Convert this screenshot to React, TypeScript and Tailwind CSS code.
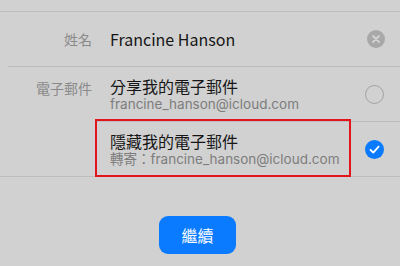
import React from "react";

const font = { fontFamily: '"Noto Sans CJK TC", "Noto Sans", sans-serif' };
const subFont = { fontFamily: 'Inter, "Noto Sans CJK TC", sans-serif' };

const ClearIcon = () => (
  <svg width="18" height="18" viewBox="0 0 18 18">
    <circle cx="9" cy="9" r="9" fill="#a8a8a8" />
    <path d="M6 6 L12 12 M12 6 L6 12" stroke="#d3d3d3" strokeWidth="1.8" strokeLinecap="round" />
  </svg>
);

const EmptyCircle = () => (
  <div className="w-[19px] h-[19px] rounded-full border-[1.5px] border-[#a3a3a3]" />
);

const CheckCircle = () => (
  <svg width="19" height="19" viewBox="0 0 19 19">
    <circle cx="9.5" cy="9.5" r="9.5" fill="#0a7aff" />
    <path d="M5.5 9.8 L8.3 12.6 L13.6 6.6" fill="none" stroke="#ffffff" strokeWidth="1.8" strokeLinecap="round" strokeLinejoin="round" />
  </svg>
);

export default function App() {
  return (
    <div className="w-[400px] h-[266px] bg-[#d1d1d1] overflow-hidden" style={font}>
      <div className="h-[12px] border-b border-[#bdbdbd]" />

      {/* name row */}
      <div className="flex items-center h-[55px] ml-[8px] border-b border-[#bdbdbd]">
        <div className="w-[84px] text-right text-[14px] text-[#8a8a8a]">姓名</div>
        <div className="flex-1 pl-[18px] text-[16px] text-[#161616]">Francine Hanson</div>
        <div className="w-[52px] flex justify-center pl-[4px]">
          <ClearIcon />
        </div>
      </div>

      {/* email options */}
      <div className="flex border-b border-[#bdbdbd]">
        <div className="w-[92px] pt-[11px] text-right text-[14px] text-[#8a8a8a]">電子郵件</div>
        <div className="flex-1 ml-[4px]">
          <div className="flex items-center h-[55px] border-b border-[#bdbdbd]">
            <div className="flex-1 pl-[14px]">
              <div className="text-[16px] leading-[20px] text-[#161616]">分享我的電子郵件</div>
              <div className="text-[13.5px] leading-[17px] text-[#7d7d7d]" style={subFont}>francine_hanson@icloud.com</div>
            </div>
            <div className="w-[52px] flex justify-center">
              <EmptyCircle />
            </div>
          </div>
          <div className="relative flex items-center h-[54px]">
            <div className="flex-1 pl-[14px]">
              <div className="text-[16px] leading-[20px] text-[#161616]">隱藏我的電子郵件</div>
              <div className="text-[13.5px] leading-[17px] text-[#7d7d7d]" style={subFont}>轉寄：francine_hanson@icloud.com</div>
            </div>
            <div className="w-[52px] flex justify-center">
              <CheckCircle />
            </div>
            <div className="absolute left-[-1px] top-[-3px] w-[256px] h-[58px] border-2 border-[#e3141c]" />
          </div>
        </div>
      </div>

      <div className="flex justify-center pt-[39px] pr-[5px]">
        <button className="w-[77px] h-[38px] rounded-[9px] bg-[#0a7aff] text-white text-[16px]">繼續</button>
      </div>
    </div>
  );
}
